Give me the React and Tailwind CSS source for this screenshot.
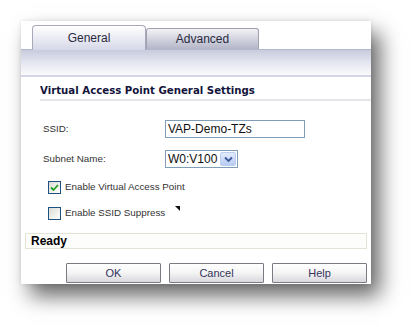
export default function App() {
  const font = { fontFamily: 'Tahoma, "Liberation Sans", Arial, sans-serif' }

  return (
    <div className="w-[413px] h-[327px] bg-white pl-[21px] pt-[21px]" style={font}>
      <div className="w-[350px] h-[263px] bg-white flex flex-col shadow-[9px_12px_20px_rgba(0,0,0,0.6),0_0_4px_rgba(0,0,0,0.1)]">
        {/* Tabs */}
        <div className="h-[28px] flex items-end pl-[11px] relative z-10">
          <div className="w-[114px] h-[25px] -mb-[1px] rounded-t-[4px] border border-b-0 border-[#a8a8b8] bg-gradient-to-b from-white to-[#d6d8e8] flex items-center justify-center text-[12px] text-[#2a2a40] pb-[1px]">
            General
          </div>
          <div className="w-[113px] h-[21px] rounded-t-[3px] border border-b-0 border-[#a0a0b0] bg-gradient-to-b from-[#f2f2f6] to-[#b4b6c8] flex items-center justify-center text-[12px] text-[#2a2a40]">
            Advanced
          </div>
        </div>

        {/* Band */}
        <div className="h-[28px] border-t border-[#b4b8cc] border-b-2 border-b-[#d4d6e6] bg-gradient-to-b from-[#c8cbdd] via-[#e4e6f0] to-[#fbfbfd]" />

        {/* Heading */}
        <div className="pl-[19px] pt-[7px]">
          <div className="text-[10.2px] font-bold text-[#14143c] leading-[13px] pb-[2px] border-b-2 border-[#e6e6ea]" style={{ fontFamily: '"DejaVu Sans", Verdana, sans-serif' }}>
            Virtual Access Point General Settings
          </div>
        </div>

        {/* SSID */}
        <div className="flex items-center mt-[19px] h-[18px]">
          <div className="w-[144px] pl-[22px] text-[9.8px] text-[#333]">SSID:</div>
          <div className="w-[140px] h-[18px] border border-[#7f9db9] flex items-center pl-[2px] text-[12px] text-[#111]" style={{ fontFamily: '"Liberation Sans", Arial, sans-serif' }}>
            VAP-Demo-TZs
          </div>
        </div>

        {/* Subnet */}
        <div className="flex items-center mt-[12px] h-[18px]">
          <div className="w-[144px] pl-[22px] text-[9.8px] text-[#333]">Subnet Name:</div>
          <div className="w-[73px] h-[18px] border border-[#7f9db9] flex items-center justify-between pl-[2px] pr-[1px] text-[12px] text-[#111]" style={{ fontFamily: '"Liberation Sans", Arial, sans-serif' }}>
            <span>W0:V100</span>
            <span className="w-[16px] h-[14px] rounded-[2px] border border-[#b8cdf0] bg-gradient-to-b from-[#e4ecfc] to-[#b8ccf4] flex items-center justify-center">
              <svg width="9" height="7" viewBox="0 0 9 7">
                <path d="M1 1.5 L4.5 5 L8 1.5" fill="none" stroke="#3a5a9a" strokeWidth="1.8" />
              </svg>
            </span>
          </div>
        </div>

        {/* Checkboxes */}
        <div className="flex items-center mt-[13px] pl-[27px] h-[13px]">
          <span className="w-[13px] h-[13px] border border-[#1c5180] bg-gradient-to-br from-[#dcdcd6] to-white flex items-center justify-center">
            <svg width="9" height="8" viewBox="0 0 9 8">
              <path d="M1 3.5 L3.5 6 L8 1" fill="none" stroke="#21a121" strokeWidth="1.8" />
            </svg>
          </span>
          <span className="ml-[4px] text-[9.8px] text-[#333]">Enable Virtual Access Point</span>
        </div>
        <div className="flex items-center mt-[13px] pl-[27px] h-[13px]">
          <span className="w-[13px] h-[13px] border border-[#1c5180] bg-gradient-to-br from-[#dcdcd6] to-white" />
          <span className="ml-[4px] text-[9.8px] text-[#333]">Enable SSID Suppress</span>
          <svg width="5" height="5" viewBox="0 0 5 5" className="ml-[10px] -mt-[10px]">
            <polygon points="0,0 5,0 5,5" fill="#111" />
          </svg>
        </div>

        {/* Status */}
        <div className="mx-[4px] mt-[13px] h-[16px] border border-[#e4e4d6] bg-[#fdfdfb] flex items-center pl-[5px]">
          <span className="text-[12px] font-bold text-black leading-none" style={{ fontFamily: '"Liberation Sans", Arial, sans-serif' }}>Ready</span>
        </div>

        {/* Buttons */}
        <div className="flex justify-end gap-[8px] pr-[4px] mt-[14px]">
          {['OK', 'Cancel', 'Help'].map((label) => (
            <div
              key={label}
              className="w-[95px] h-[20px] border border-[#7a7a82] rounded-[1px] bg-gradient-to-b from-white via-[#f4f4f4] to-[#d8d8de] flex items-center justify-center text-[11px] text-[#33335a]"
            >
              {label}
            </div>
          ))}
        </div>
      </div>
    </div>
  )
}
